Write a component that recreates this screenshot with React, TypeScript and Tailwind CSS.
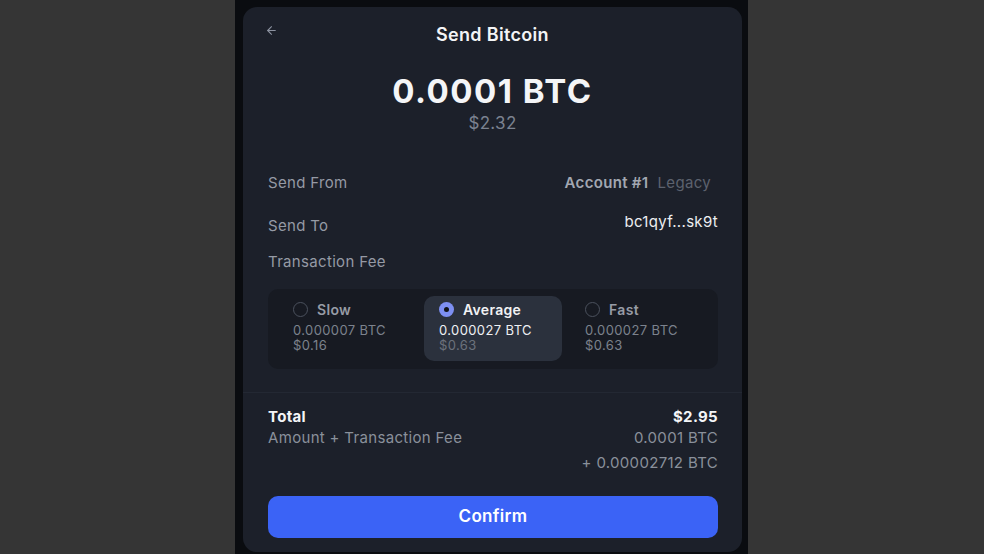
import { ArrowLeft } from 'lucide-react'

type Fee = { label: string; btc: string; usd: string; selected?: boolean }

const fees: Fee[] = [
  { label: 'Slow', btc: '0.000007 BTC', usd: '$0.16' },
  { label: 'Average', btc: '0.000027 BTC', usd: '$0.63', selected: true },
  { label: 'Fast', btc: '0.000027 BTC', usd: '$0.63' },
]

function FeeOption({ fee }: { fee: Fee }) {
  return (
    <div
      className={`rounded-[10px] px-[15px] pt-[4px] pb-[8px] ${
        fee.selected ? 'bg-[#2b313d]' : ''
      }`}
    >
      <div className="flex items-center gap-[9px] h-[18px]">
        {fee.selected ? (
          <span className="w-[15px] h-[15px] rounded-full bg-[#7d8ff2] flex items-center justify-center">
            <span className="w-[5px] h-[5px] rounded-full bg-[#111318]" />
          </span>
        ) : (
          <span className="w-[15px] h-[15px] rounded-full border-[1.5px] border-[#4b515d]" />
        )}
        <span
          className={`text-[14px] font-semibold ${
            fee.selected ? 'text-[#f1f2f4]' : 'text-[#979ca6]'
          }`}
        >
          {fee.label}
        </span>
      </div>
      <div
        className={`mt-[5px] text-[13px] leading-[15px] tracking-[0.03em] ${
          fee.selected ? 'text-[#eef0f3]' : 'text-[#7c828d]'
        }`}
      >
        {fee.btc}
      </div>
      <div
        className={`text-[13px] leading-[15px] tracking-[0.03em] ${
          fee.selected ? 'text-[#6b717c]' : 'text-[#7c828d]'
        }`}
      >
        {fee.usd}
      </div>
    </div>
  )
}

export default function App() {
  return (
    <div
      className="w-full h-[554px] bg-[#353535] flex overflow-hidden tracking-[0.02em]"
      style={{ fontFamily: 'Inter, "Noto Sans", sans-serif' }}
    >
      <div className="ml-[235px] w-[513px] h-full bg-[#0a0c10] pl-[8px] pr-[6px] pt-[7px]">
        <div className="h-[545px] rounded-[14px] bg-[#1c202a] flex flex-col">
          {/* Header */}
          <div className="flex items-start px-[22px] pt-[15px]">
            <ArrowLeft className="w-[13px] h-[13px] mt-[2px] text-[#8c92a0]" strokeWidth={2} />
            <div className="flex-1 text-center text-[18px] leading-[26px] font-semibold text-[#f3f4f6]">
              Send Bitcoin
            </div>
            <div className="w-[13px]" />
          </div>

          {/* Amount */}
          <div className="mt-[23px] text-center text-[33px] leading-[40px] font-bold tracking-[0.045em] text-[#f4f5f7]">
            0.0001 BTC
          </div>
          <div className="mt-[1px] text-center text-[17px] leading-[22px] text-[#7b8290]">
            $2.32
          </div>

          <div className="pl-[25px] pr-[24px] flex flex-col">
            <div className="mt-[38px] flex justify-between items-center h-[22px] text-[15px]">
              <span className="text-[#959aa5]">Send From</span>
              <span className="pr-[7px]">
                <span className="font-semibold text-[#a2a7b1]">Account #1</span>
                <span className="ml-[9px] text-[#5c626e]">Legacy</span>
              </span>
            </div>
            <div className="mt-[21px] flex justify-between items-center h-[22px] text-[15px]">
              <span className="text-[#959aa5]">Send To</span>
              <span className="text-[#eceef1] -mt-[8px]">bc1qyf...sk9t</span>
            </div>
            <div className="mt-[14px] flex items-center h-[22px] text-[15px]">
              <span className="text-[#959aa5]">Transaction Fee</span>
            </div>

            {/* Fee options */}
            <div className="mt-[16px] h-[80px] rounded-[10px] bg-[#171a22] px-[10px] pt-[7px] grid grid-cols-3 gap-[8px] items-start">
              {fees.map((f) => (
                <FeeOption key={f.label} fee={f} />
              ))}
            </div>
          </div>

          {/* Totals */}
          <div className="mt-[23px] border-t border-[#232833] pl-[25px] pr-[24px] pt-[14px]">
            <div className="flex justify-between items-center h-[20px] text-[15px] font-bold text-[#f4f5f7]">
              <span>Total</span>
              <span>$2.95</span>
            </div>
            <div className="mt-[1px] flex justify-between items-center h-[20px] text-[15px] text-[#8a909b]">
              <span>Amount + Transaction Fee</span>
              <span>0.0001 BTC</span>
            </div>
            <div className="mt-[5px] flex justify-end items-center h-[20px] text-[15px] text-[#8a909b]">
              + 0.00002712 BTC
            </div>

            <button className="mt-[23px] w-full h-[42px] rounded-[10px] bg-[#3b63f6] text-white text-[17px] font-semibold">
              Confirm
            </button>
          </div>
        </div>
      </div>
    </div>
  )
}
